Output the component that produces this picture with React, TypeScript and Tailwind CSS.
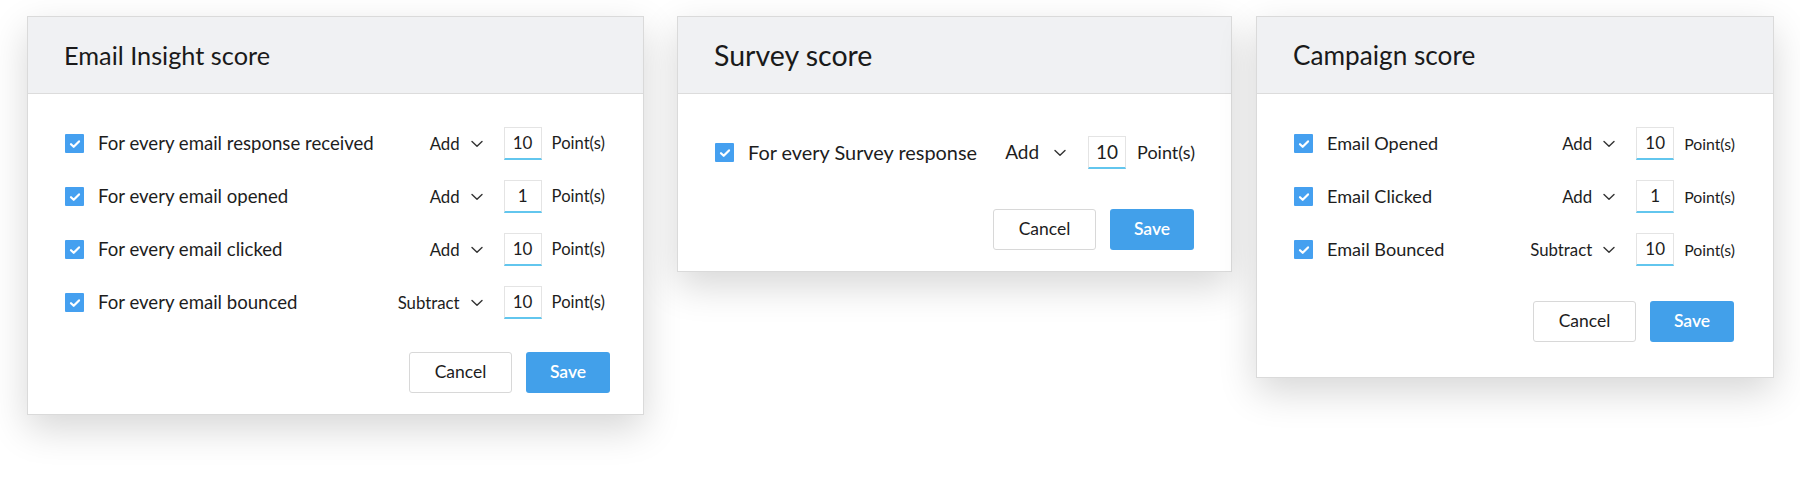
import type { ReactNode } from "react";

type Row = { label: string; op: "Add" | "Subtract"; value: string };

type Size = {
  title: string;
  label: string;
  op: string;
  value: string;
  unit: string;
  chevronGap: string;
  inputGap: string;
  unitGap: string;
};

const insightSize: Size = {
  title: "text-[25.3px]",
  label: "text-[18.6px]",
  op: "text-[16.8px]",
  value: "text-[17px]",
  unit: "text-[16.6px]",
  chevronGap: "ml-[11px]",
  inputGap: "ml-[21px]",
  unitGap: "ml-[10px]",
};

const surveySize: Size = {
  title: "text-[28.5px]",
  label: "text-[19.9px]",
  op: "text-[19px]",
  value: "text-[19px]",
  unit: "text-[18px]",
  chevronGap: "ml-[15px]",
  inputGap: "ml-[22px]",
  unitGap: "ml-[11px]",
};

const campaignSize: Size = {
  title: "text-[26.2px]",
  label: "text-[18.1px]",
  op: "text-[16.8px]",
  value: "text-[17px]",
  unit: "text-[15.8px]",
  chevronGap: "ml-[11px]",
  inputGap: "ml-[21px]",
  unitGap: "ml-[10px]",
};

const insightRows: Row[] = [
  { label: "For every email response received", op: "Add", value: "10" },
  { label: "For every email opened", op: "Add", value: "1" },
  { label: "For every email clicked", op: "Add", value: "10" },
  { label: "For every email bounced", op: "Subtract", value: "10" },
];

const surveyRows: Row[] = [{ label: "For every Survey response", op: "Add", value: "10" }];

const campaignRows: Row[] = [
  { label: "Email Opened", op: "Add", value: "10" },
  { label: "Email Clicked", op: "Add", value: "1" },
  { label: "Email Bounced", op: "Subtract", value: "10" },
];

function CheckBox() {
  return (
    <span className="flex h-[19px] w-[19px] shrink-0 items-center justify-center rounded-[1px] bg-[#45a0f0]">
      <svg width="12" height="10" viewBox="0 0 12 10" fill="none">
        <path d="M2 5.2 4.7 7.8 10 2.4" stroke="#fff" strokeWidth="2.2" strokeLinecap="round" strokeLinejoin="round" />
      </svg>
    </span>
  );
}

function Chevron() {
  return (
    <svg width="12" height="8" viewBox="0 0 12 8" fill="none" className="shrink-0">
      <path d="M1 1.5 6 6.3 11 1.5" stroke="#333" strokeWidth="1.4" strokeLinecap="round" strokeLinejoin="round" />
    </svg>
  );
}

function ScoreRow({ row, size }: { row: Row; size: Size }) {
  return (
    <div className="flex h-[33px] items-center">
      <CheckBox />
      <span className={`ml-[14px] flex-1 text-[#1d1d1d] ${size.label}`}>{row.label}</span>
      <span className={`text-[#1d1d1d] ${size.op}`}>{row.op}</span>
      <span className={size.chevronGap}>
        <Chevron />
      </span>
      <span
        className={`${size.inputGap} flex h-[33px] w-[38px] items-center justify-center border border-b-2 border-[#e4e4e4] border-b-[#62c6ee] text-[#1d1d1d] ${size.value}`}
      >
        {row.value}
      </span>
      <span className={`${size.unitGap} pr-[2px] text-[#1d1d1d] ${size.unit}`}>Point(s)</span>
    </div>
  );
}

function Buttons() {
  return (
    <div className="flex justify-end gap-[14px]">
      <button className="h-[41px] w-[103px] rounded-[3px] border border-[#d8d8d8] bg-white text-[17.5px] text-[#1d1d1d]">
        Cancel
      </button>
      <button className="h-[41px] w-[84px] rounded-[3px] bg-[#42a0ea] text-[17.5px] font-semibold text-white">
        Save
      </button>
    </div>
  );
}

function ScoreCard({
  title,
  size,
  className,
  children,
}: {
  title: string;
  size: Size;
  className: string;
  children: ReactNode;
}) {
  return (
    <div className={`shrink-0 border border-[#dadada] bg-white shadow-[0_14px_36px_rgba(0,0,0,0.16)] ${className}`}>
      <div className="flex h-[77px] items-center border-b border-[#dcdcdc] bg-[#f0f1f3] pl-[36px] pt-[1px]">
        <h2 className={`text-[#1a1a1a] ${size.title}`}>{title}</h2>
      </div>
      {children}
    </div>
  );
}

export default function App() {
  return (
    <div className="flex h-[483px] w-[1800px] items-start bg-white pl-[27px] pt-[16px] font-['Lato',sans-serif]">
      {/* Email insight */}
      <ScoreCard title="Email Insight score" size={insightSize} className="w-[617px]">
        <div className="flex flex-col gap-[20px] pl-[37px] pr-[36px] pt-[33px]">
          {insightRows.map((r) => (
            <ScoreRow key={r.label} row={r} size={insightSize} />
          ))}
        </div>
        <div className="pb-[21px] pr-[33px] pt-[33px]">
          <Buttons />
        </div>
      </ScoreCard>

      {/* Survey */}
      <ScoreCard title="Survey score" size={surveySize} className="ml-[33px] w-[555px]">
        <div className="flex flex-col pl-[37px] pr-[34px] pt-[42px]">
          {surveyRows.map((r) => (
            <ScoreRow key={r.label} row={r} size={surveySize} />
          ))}
        </div>
        <div className="pb-[21px] pr-[37px] pt-[40px]">
          <Buttons />
        </div>
      </ScoreCard>

      {/* Campaign */}
      <ScoreCard title="Campaign score" size={campaignSize} className="ml-[24px] w-[518px]">
        <div className="flex flex-col gap-[20px] pl-[37px] pr-[36px] pt-[33px]">
          {campaignRows.map((r) => (
            <ScoreRow key={r.label} row={r} size={campaignSize} />
          ))}
        </div>
        <div className="pb-[35px] pr-[39px] pt-[35px]">
          <Buttons />
        </div>
      </ScoreCard>
    </div>
  );
}
